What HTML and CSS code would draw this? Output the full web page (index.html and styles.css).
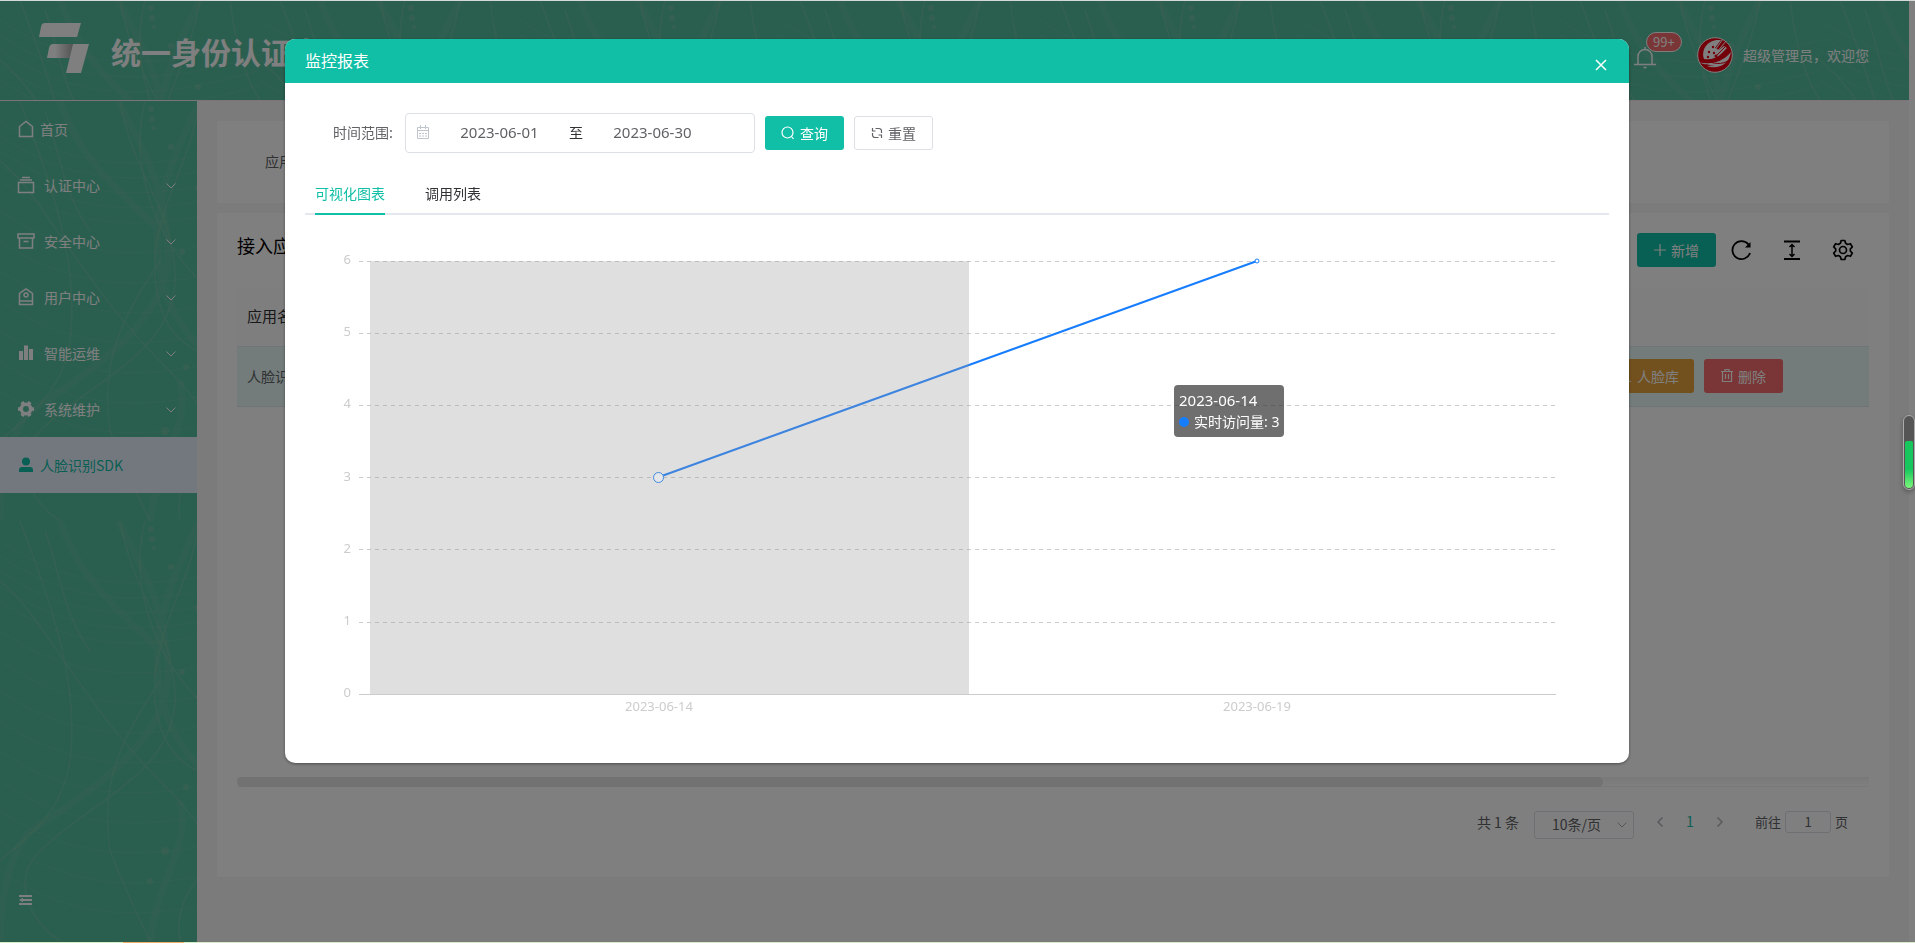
FILE: index.html
```html
<!DOCTYPE html>
<html lang="zh-CN">
<head>
<meta charset="utf-8">
<title>统一身份认证中心</title>
<link rel="stylesheet" href="styles.css">
</head>
<body>
<div class="app">
  <header class="topbar">
    <svg class="logo" width="50" height="50" viewBox="0 0 50 50" aria-hidden="true">
      <defs><linearGradient id="fold"><stop offset="0.3" stop-color="#fff"/><stop offset="1" stop-color="#a8a8a8"/></linearGradient></defs>
      <path d="M4 0H42L38 14H0L2 4Q2.500 0 6 0Z" fill="#fff"/>
      <path d="M13 21H34L31 35H8L10 25Q11 21 14 21Z" fill="url(#fold)"/>
      <path d="M34 21H50L42 50H27Z" fill="#fff"/>
    </svg>
    <h1 class="brand">统一身份认证中心</h1>
    <div class="user">
      <button class="bell" type="button" aria-label="消息">
        <svg width="22" height="22" viewBox="0 0 22 22" fill="none" stroke="#fff" stroke-width="1.500"><path d="M4 17V9.500a7 7 0 0 1 14 0V17M0 17.500H22M11 0V2M9.500 20.500H12.500"/></svg>
        <span class="badge">99+</span>
      </button>
      <svg class="avatar" width="36" height="36" viewBox="0 0 36 36" aria-hidden="true">
        <circle cx="18" cy="18" r="17.300" fill="#e60012" stroke="#fff" stroke-width="1"/>
        <path d="M7 22C4 13 10 4 20 3L24 3L18 11L22 13L27 9L30 11L24 17C20 21 14 23 7 22Z" fill="#fff"/>
        <path d="M2 25C12 28 25 26 34 15C32 28 20 33 10 29L18 28C12 28 7 28 2 25Z" fill="#fff"/>
        <path d="M26 2L18 13M29 4L20 15" stroke="#fff" fill="none"/>
        <path d="M31 7L20 18M3 25C14 23 20 30 31 24" stroke="#e60012" fill="none"/>
        <g fill="#e60012"><circle cx="12" cy="15" r="1.200"/><circle cx="16" cy="10" r="1.200"/><circle cx="17" cy="16" r="1.200"/><circle cx="11" cy="20" r="1.200"/><circle cx="19" cy="19" r="1.500"/></g>
      </svg>
      <span>超级管理员，欢迎您</span>
    </div>
  </header>

  <div class="body">
    <nav class="sidebar">
      <a class="nav-item leaf" href="#"><svg class="nav-icon" viewBox="0 0 18 18"><path d="M2.500 16.500V6.500L9 1.500L15.500 6.500V16.500Z"/></svg>首页</a>
      <a class="nav-item" href="#"><svg class="nav-icon" viewBox="0 0 18 18"><path d="M1.500 6.500H16.500V16.500H1.500ZM3 4H15M5 1.500H13"/></svg><span>认证中心</span><svg class="caret" viewBox="0 0 10 6"><path d="M0.500 0.500L5 5L9.500 0.500"/></svg></a>
      <a class="nav-item" href="#"><svg class="nav-icon" viewBox="0 0 18 18"><path d="M1 2H17V6H1ZM2.500 6V16H15.500V6M6.500 9.500H11.500"/></svg><span>安全中心</span><svg class="caret" viewBox="0 0 10 6"><path d="M0.500 0.500L5 5L9.500 0.500"/></svg></a>
      <a class="nav-item" href="#"><svg class="nav-icon" viewBox="0 0 18 18"><path d="M2.500 16.500V5.500L9 1L15.500 5.500V16.500ZM2.500 13H15.500"/><circle cx="9" cy="7" r="2"/></svg><span>用户中心</span><svg class="caret" viewBox="0 0 10 6"><path d="M0.500 0.500L5 5L9.500 0.500"/></svg></a>
      <a class="nav-item" href="#"><svg class="nav-icon solid" viewBox="0 0 18 18"><path d="M2 7H6V16H2ZM7 1.500H11V16H7ZM12 5H16V16H12Z"/></svg><span>智能运维</span><svg class="caret" viewBox="0 0 10 6"><path d="M0.500 0.500L5 5L9.500 0.500"/></svg></a>
      <a class="nav-item" href="#"><svg class="nav-icon gear" viewBox="0 0 18 18"><circle cx="9" cy="9" r="4.700"/><path d="M5 2L6.500 4.500M13 2L11.500 4.500M1 9H4M14 9H17M5 16L6.500 13.500M13 16L11.500 13.500"/></svg><span>系统维护</span><svg class="caret" viewBox="0 0 10 6"><path d="M0.500 0.500L5 5L9.500 0.500"/></svg></a>
      <a class="nav-item leaf active" href="#"><svg class="nav-icon solid" viewBox="0 0 18 18"><circle cx="9" cy="5.500" r="4"/><path d="M2 16V14Q2 11 5 11H13Q16 11 16 14V16Z"/></svg>人脸识别SDK</a>
      <button class="collapse" type="button" aria-label="收起菜单"><svg width="13" height="10" viewBox="0 0 13 10" fill="#fff"><path d="M0 0H13V2H0ZM4 4H13V6H4ZM0 8H13V10H0ZM0 5L4 2.800V7.200Z"/></svg></button>
    </nav>

    <main class="content">
      <section class="card search"><label for="appname">应用名称</label><input class="plain" id="appname" type="text"></section>
      <section class="card list">
        <div class="list-head">
          <h2>接入应用列表</h2>
          <div class="tools">
            <button class="btn primary" type="button"><svg width="12" height="12" viewBox="0 0 12 12"><path d="M6 0V12M0 6H12"/></svg>新增</button>
            <button class="tool" type="button" aria-label="刷新"><svg width="22" height="22" viewBox="0 0 22 22"><path d="M18.500 5.500A9 9 0 1 0 20 14"/><path d="M20.500 3V8.500H15Z" fill="#000" stroke="none"/></svg></button>
            <button class="tool" type="button" aria-label="密度"><svg width="22" height="22" viewBox="0 0 22 22"><path d="M3 2.500H19M3 20H19"/><path d="M11 6V17M8.500 8L11 5.500L13.500 8M8.500 15L11 17.500L13.500 15" stroke-width="1.500"/></svg></button>
            <button class="tool" type="button" aria-label="设置"><svg width="22" height="22" viewBox="0 0 22 22"><path d="M9.200 1.500H12.800L13.600 4.300L15.600 5.500L18.400 4.700L20.300 7.900L18.300 10V12L20.300 14.100L18.400 17.300L15.600 16.500L13.600 17.700L12.800 20.500H9.200L8.400 17.700L6.400 16.500L3.600 17.300L1.700 14.100L3.700 12V10L1.700 7.900L3.600 4.700L6.400 5.500L8.400 4.300Z" stroke-width="1.700" stroke-linejoin="round"/><circle cx="11" cy="11" r="3.500" stroke-width="1.700"/></svg></button>
          </div>
        </div>
        <div class="table-wrap">
          <table>
            <thead><tr><th>应用名称</th><th class="ops">操作</th></tr></thead>
            <tbody><tr><td>人脸识别SDK</td><td class="ops"><div class="row-actions">
              <button class="btn warn" type="button"><svg width="12" height="12" viewBox="0 0 12 12"><circle cx="6" cy="3.500" r="2.500"/><path d="M1 11.500H11"/></svg>人脸库</button>
              <button class="btn danger" type="button"><svg width="12" height="13" viewBox="0 0 12 13"><path d="M0 2.500H12M4 2V0.500H8V2M1.500 3V12.500H10.500V3M4.500 5V10M7.500 5V10"/></svg>删除</button>
            </div></td></tr></tbody>
          </table>
          <div class="hscroll"><div class="thumb"></div></div>
        </div>
        <div class="pager">
          <span class="total">共 1 条</span>
          <div class="size"><select aria-label="每页条数"><option>10条/页</option></select><svg width="10" height="6" viewBox="0 0 10 6"><path d="M0.500 0.500L5 5L9.500 0.500"/></svg></div>
          <button class="page prev" type="button" aria-label="上一页"><svg width="6" height="10" viewBox="0 0 6 10"><path d="M5.500 0.500L1 5L5.500 9.500"/></svg></button>
          <button class="page current" type="button">1</button>
          <button class="page next" type="button" aria-label="下一页"><svg width="6" height="10" viewBox="0 0 6 10"><path d="M0.500 0.500L5 5L0.500 9.500"/></svg></button>
          <label class="jump">前往<input type="text" value="1">页</label>
        </div>
      </section>
    </main>
  </div>
</div>

<div class="overlay">
  <div class="dialog" role="dialog" aria-labelledby="dlg-title">
    <div class="dialog-head">
      <h2 id="dlg-title">监控报表</h2>
      <button class="close" type="button" aria-label="关闭"><svg width="12" height="12" viewBox="0 0 12 12"><path d="M1 1L11 11M11 1L1 11" stroke="#fff" stroke-width="1.500"/></svg></button>
    </div>
    <div class="dialog-body">
      <form class="filter">
        <label for="from">时间范围:</label>
        <div class="range">
          <svg width="14" height="14" viewBox="0 0 14 14"><path d="M1.500 2.500H12.500V13.500H1.500ZM1.500 5.500H12.500M4.500 0V4M9.500 0V4M3 8.500H5M6 8.500H8M9 8.500H11M3 11H5M6 11H8M9 11H11"/></svg>
          <input id="from" type="text" value="2023-06-01">
          <span>至</span>
          <input type="text" aria-label="结束日期" value="2023-06-30">
        </div>
        <button class="btn primary" type="button"><svg width="14" height="14" viewBox="0 0 14 14"><circle cx="6.500" cy="6.500" r="5.500"/><path d="M10.500 10.500L12.500 13"/></svg>查询</button>
        <button class="btn ghost" type="button"><svg width="12" height="12" viewBox="0 0 12 12"><path d="M4.500 1.500H8A2.500 2.500 0 0 1 10.500 4V6M1.500 1V4H4.500M7.500 10.500H4A2.500 2.500 0 0 1 1.500 8V6M10.500 11V8H7.500"/></svg>重置</button>
      </form>
      <div class="tabs" role="tablist">
        <button class="tab on" type="button" role="tab">可视化图表</button>
        <button class="tab" type="button" role="tab">调用列表</button>
      </div>
      <div class="chart">
        <svg viewBox="0 0 1304 528" role="img" aria-label="实时访问量">
          <g class="grid"><path d="M54 46.500H1251M54 118.500H1251M54 190.500H1251M54 262.500H1251M54 334.500H1251M54 407.500H1251"/></g>
          <path class="axis" d="M54 479.500H1251"/>
          <g class="ylabels"><text x="46" y="49">6</text><text x="46" y="121">5</text><text x="46" y="193">4</text><text x="46" y="266">3</text><text x="46" y="338">2</text><text x="46" y="410">1</text><text x="46" y="482">0</text></g>
          <g class="xlabels"><text x="354" y="496">2023-06-14</text><text x="952" y="496">2023-06-19</text></g>
          <path class="series" d="M354 262L952 46"/>
          <circle class="dot" cx="952" cy="46" r="2"/>
          <rect class="shade" x="65" y="46" width="599" height="433"/>
          <circle class="dot-active" cx="353.500" cy="262.500" r="5"/>
        </svg>
        <div class="tip"><div>2023-06-14</div><div class="tip-row"><i></i><span>实时访问量: <b>3</b></span></div></div>
      </div>
    </div>
  </div>
</div>
<div class="meter"><div class="meter-fill"></div></div>
<div class="edge-top"></div>
<div class="edge-bottom"></div>
</body>
</html>
```
FILE: styles.css
```css
:root {
  --green: #11bfa6;
  --leaf: #54bea0;
  --wisps: url("data:image/svg+xml,%3Csvg xmlns='http://www.w3.org/2000/svg' width='260' height='420'%3E%3Cg fill='none' stroke='%23b4c8a8'%3E%3Cg stroke-width='7' stroke-opacity='.1'%3E%3Cpath d='M118 0C150 60 165 90 168 150C170 210 110 260 30 310C10 330 0 380 0 420M200 0C170 60 150 110 160 170C170 230 220 270 260 290M60 0C80 60 120 90 160 130M150 420C160 350 190 330 180 280'/%3E%3C/g%3E%3Cg stroke-width='1.5' stroke-opacity='.2'%3E%3Cpath d='M20 0C50 80 80 160 70 240C60 300 20 320 0 340M120 0C135 80 170 100 175 170C180 250 90 280 40 330C10 360 30 400 60 420M145 0C130 60 150 130 200 180C225 210 240 260 260 290M200 0C190 60 165 90 155 150C150 230 190 270 260 250M45 10C60 50 62 90 90 130M160 160C120 220 100 260 110 330C130 380 140 400 150 420M230 0C235 40 245 80 260 100M0 60C40 90 80 180 160 260S230 380 240 420M180 420C170 360 230 330 260 310'/%3E%3C/g%3E%3Cg stroke-opacity='.12'%3E%3Cpath d='M0 20C60 60 130 80 260 40M0 35C60 75 130 95 260 55M0 50C60 90 130 110 260 70M0 65C60 105 130 125 260 85M0 80C60 120 130 140 260 100M0 110C60 150 130 170 260 130M0 140C60 180 130 200 260 160M0 170C60 210 130 230 260 190M0 200C60 240 130 260 260 220M0 230C60 270 130 290 260 250M0 260C60 300 130 320 260 280M0 290C60 330 130 350 260 310M0 320C60 360 130 380 260 340M0 350C60 390 130 410 260 370'/%3E%3C/g%3E%3C/g%3E%3Cg fill='%23b4c8a8' fill-opacity='.22'%3E%3Ccircle cx='151' cy='8' r='3'/%3E%3Ccircle cx='152' cy='18' r='3'/%3E%3Ccircle cx='154' cy='27' r='2'/%3E%3Ccircle cx='171' cy='46' r='3'/%3E%3Ccircle cx='198' cy='87' r='3'/%3E%3Ccircle cx='182' cy='151' r='3'/%3E%3Ccircle cx='186' cy='266' r='3'/%3E%3Ccircle cx='165' cy='330' r='4'/%3E%3Ccircle cx='150' cy='360' r='3'/%3E%3C/g%3E%3C/svg%3E");
}
* { box-sizing: border-box; }
body {
  margin: 0;
  font: 14px/20px "Noto Sans CJK SC", "Noto Sans", sans-serif;
  color: #606266;
  background: #fff;
}
h1, h2 { margin: 0; }
button, input, select { font: inherit; color: inherit; }
button { border: 0; padding: 0; background: none; cursor: pointer; }
a { color: inherit; text-decoration: none; }
svg { flex: none; }

.app { display: flex; flex-direction: column; min-height: 100vh; padding-right: 6px; }
.topbar {
  display: flex;
  align-items: center;
  height: 101px;
  padding: 0 40px 4px 39px;
  border-bottom: 1px solid #f6e8f0;
  background: var(--leaf) var(--wisps);
  color: #fff;
}
.brand { margin-left: 22px; padding-top: 6px; font-size: 30px; line-height: 40px; font-weight: 700; }
.user { display: flex; align-items: center; margin-left: auto; padding-top: 14px; }
.bell { position: relative; display: flex; padding-top: 6px; margin-right: 41px; }
.badge {
  position: absolute;
  top: -9px;
  left: 12px;
  height: 20px;
  padding: 0 6px;
  border: 1px solid #fff;
  border-radius: 10px;
  background: #f56c6c;
  font-size: 13px;
  line-height: 18px;
}
.avatar { margin-right: 10px; }

.body { display: flex; flex: 1; }
.sidebar {
  display: flex;
  flex-direction: column;
  width: 197px;
  flex: none;
  padding-bottom: 32px;
  background: var(--leaf) var(--wisps);
  color: #fff;
}
.nav-item { display: flex; align-items: center; gap: 9px; height: 56px; padding: 0 21px 0 17px; }
.leaf { gap: 5px; }
.nav-item.active { background: #e6f0ff; color: var(--green); }
.nav-icon { width: 18px; height: 18px; margin-bottom: 1px; fill: none; stroke: currentColor; stroke-width: 1.500; }
.nav-icon.solid { fill: currentColor; stroke: none; }
.nav-icon.gear { stroke-width: 3.500; }
.caret { width: 10px; height: 6px; margin: 2px 0 0 auto; fill: none; stroke: currentColor; }
.collapse { display: flex; margin-top: auto; padding: 0 0 6px 19px; }

.content { flex: 1; display: flex; flex-direction: column; gap: 10px; padding: 20px 20px 66px; background: #f6f6f6; }
.card { background: #fff; border-radius: 2px; }
.search { display: flex; align-items: center; height: 82px; padding: 0 0 2px 48px; gap: 12px; }
.plain { height: 34px; border: 1px solid #dcdfe6; border-radius: 4px; }
.list { flex: 1; display: flex; flex-direction: column; padding: 20px; }
.list-head { display: flex; justify-content: space-between; color: #000; }
.list-head h2 { font-size: 18px; line-height: 24px; font-weight: 400; }
.tools { display: flex; align-items: center; gap: 29px; padding-right: 15px; }
.tools .btn { margin-right: -15px; }
.tool { display: flex; }
.tool svg { fill: none; stroke: #000; stroke-width: 1.800; }
.btn {
  display: inline-flex;
  align-items: center;
  justify-content: center;
  gap: 5px;
  min-width: 79px;
  height: 34px;
  padding: 0 15px 1px;
  border-radius: 3px;
  color: #fff;
}
.btn svg { fill: none; stroke: currentColor; stroke-width: 1.200; }
.primary { background: var(--green); }
.warn { background: #e6a23c; }
.danger { background: #f56c6c; }
.ghost { border: 1px solid #dcdfe6; background: #fff; color: #606266; }

.table-wrap { display: flex; flex-direction: column; flex: 1; margin-top: 20px; }
table { width: 100%; border-collapse: collapse; table-layout: fixed; }
th, td { padding: 0 10px; text-align: left; }
th { height: 59px; background: #fcfcfc; color: #303133; font-size: 15px; font-weight: 400; }
td { height: 60px; background: #e7f9f7; border-top: 1px solid #dfe9f0; border-bottom: 1px solid #dfe9f0; }
.ops { width: 34%; }
.row-actions { display: flex; justify-content: flex-end; gap: 10px; padding-right: 76px; }
.hscroll { margin-top: auto; height: 10px; border-bottom: 1px solid #f0f0f0; background: linear-gradient(#f2f2f2, #fff); }
.thumb { width: 83.700%; height: 10px; border-radius: 5px; background: #e4e4e4; }
.pager { display: flex; align-items: flex-start; height: 70px; padding: 24px 21px 0 0; justify-content: flex-end; font-size: 13px; line-height: 22px; }
.total { font-size: 14px; }
.size { position: relative; margin: 0 21px 0 15px; }
.size select { appearance: none; display: block; width: 100px; height: 28px; padding: 0 0 2px 17px; border: 1px solid #dcdfe6; border-radius: 3px; background: #fff; font-size: 14px; }
.size svg { position: absolute; right: 7px; top: 11px; }
.pager svg { fill: none; stroke: #a8abb2; }
.page { width: 30px; height: 20px; font-size: 14px; line-height: 20px; }
.pager .page svg { stroke: #b0b3ba; stroke-width: 1.500; }
.page.prev { width: 10px; margin-right: 10px; }
.page.next { width: 10px; margin: 0 30px 0 10px; }
.page.current { color: var(--green); }
.jump { display: flex; gap: 4px; }
.jump input { width: 46px; height: 22px; padding: 0; border: 1px solid #dcdfe6; border-radius: 3px; background: #fff; text-align: center; }

.overlay { position: fixed; inset: 0; padding: 39px 286px 0 285px; background: rgba(0, 0, 0, 0.5); }
.dialog { border-radius: 10px; background: #fff; box-shadow: 0 1px 3px rgba(0, 0, 0, 0.4); overflow: hidden; }
.dialog-head { display: flex; align-items: center; justify-content: space-between; height: 44px; padding: 0 22px 0 20px; background: var(--green); color: #fff; }
.dialog-head h2 { padding-bottom: 2px; font-size: 16px; line-height: 24px; font-weight: 400; }
.close { display: flex; padding-top: 8px; }
.dialog-body { padding: 30px 20px 20px; }
.filter { display: flex; align-items: center; gap: 10px; padding-left: 28px; }
.filter label { margin-right: 2px; padding-bottom: 2px; }
.range { display: flex; align-items: center; width: 350px; height: 40px; padding: 0 11px 2px 10px; border: 1px solid #dcdfe6; border-radius: 4px; }
.range svg { fill: none; stroke: #c0c4cc; }
.range input { width: 139px; border: 0; padding: 0; outline: 0; background: none; text-align: center; font-family: "Noto Sans", sans-serif; font-size: 15px; }
.range span { color: #303133; }
.tabs { display: flex; gap: 40px; margin-top: 20px; padding-left: 10px; box-shadow: inset 0 -2px #e4e7ed; }
.tab { height: 42px; border-bottom: 2px solid transparent; color: #303133; }
.tab.on { color: var(--green); border-color: var(--green); }

.chart { position: relative; }
.chart svg { display: block; width: 100%; }
.grid { stroke: #ccc; stroke-dasharray: 4 4; }
.axis { stroke: #ccc; }
.chart text { font: 13px "Noto Sans", sans-serif; fill: #ccc; }
.ylabels { text-anchor: end; }
.xlabels { text-anchor: middle; }
.series { stroke: #177dff; stroke-width: 2; }
.dot { fill: #fff; stroke: #177dff; }
.dot-active { fill: #e4e6e9; stroke: #3f8ae0; }
.shade { fill: #969696; fill-opacity: 0.3; }
.tip { position: absolute; left: 869px; top: 170px; padding: 5px; border-radius: 4px; background: rgba(50, 50, 50, 0.7); color: #fff; line-height: 21px; font-family: "Noto Sans", "Noto Sans CJK SC", sans-serif; font-size: 15px; }
.tip-row { display: flex; align-items: center; gap: 5px; font-size: 14px; }
.tip-row i { width: 10px; height: 10px; border-radius: 50%; background: #177dff; }
.tip-row b { font-weight: 400; }

.meter { position: fixed; right: 0; top: 415px; display: flex; align-items: flex-end; width: 12px; height: 75px; padding: 1px; border: 1px solid #aaa; border-radius: 6px; background: #555; box-shadow: 0 2px 5px rgba(0, 0, 0, 0.3); }
.meter-fill { width: 100%; height: 66%; border-radius: 2px 2px 5px 5px; background: linear-gradient(#17c65d 60%, #7ef57c); }
.edge-top, .edge-bottom { position: fixed; left: 0; right: 0; height: 1px; }
.edge-top { top: 0; background: #d4d8d6; }
.edge-bottom { bottom: 0; background: linear-gradient(90deg, #d6ecc4 123px, #f2b066 123px, #f2b066 184px, #d6ecc4 184px); }
```
